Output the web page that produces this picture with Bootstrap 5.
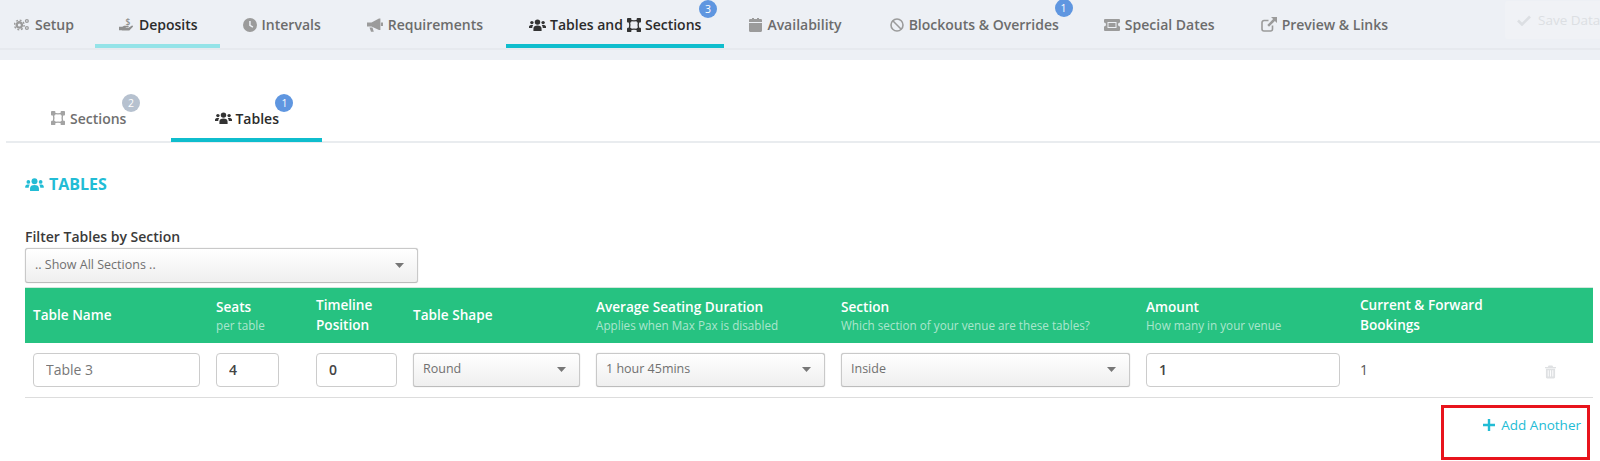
<!DOCTYPE html>
<html lang="en">
<head>
<meta charset="utf-8">
<title>Tables</title>
<link href="https://cdn.jsdelivr.net/npm/bootstrap@5.3.0/dist/css/bootstrap.min.css" rel="stylesheet">
<style>
html,body{height:461px;overflow:hidden}
body{font-family:"Open Sans",sans-serif;font-size:14px;color:#555;background:#fff}
.ic{display:inline-block;fill:currentColor;flex:none}
.topbar{height:60px;background:#edf0f5}
.toprow{height:50px;border-bottom:2px solid #e6e9ee;overflow:hidden;flex-wrap:nowrap}
.toptabs{flex-wrap:nowrap}
.toptab{position:relative;height:48px;padding:5px 23px 0;border-bottom:4px solid transparent;font-weight:600;color:#6c6c6c;gap:5px;white-space:nowrap}
.toptab:hover{color:#6c6c6c}
.toptab .ic{color:#9b9b9b}
.toptab.is-first{padding-left:14px;padding-right:21px}
.toptab.is-on{color:#2b2b2b;border-bottom-color:#0fbdcd;gap:4px}
.toptab.is-on .ic{color:#333}
.toptab.is-light{color:#2b2b2b;border-bottom-color:#94e3e8;padding-left:24px;padding-right:22px}
.toptab.is-light .ic{color:#8f8f8f}
.toptab.is-after{padding-left:25px;padding-right:25px}
.toptab.is-block{padding-right:22px}
.dot{position:absolute;width:18px;height:18px;padding:0;line-height:18px;font-size:10.5px;font-weight:400;border-radius:50%;color:#fff;background:#5f96e0;text-align:center}
.dot-three{left:193px;top:0}
.dot-one{left:188px;top:-1px}
.dot-sec{left:116px;top:-2px}
.dot-tab{left:104px;top:-2px}
.dot-gray{background:#b6c1cf}
.savebtn{margin-left:auto;margin-top:1px;width:95px;height:38px;background:#f0f2f6;color:#dcdfe3;border-radius:3px 0 0 3px;gap:7px;padding-left:12px;font-size:13.5px;white-space:nowrap;flex:none}
.subtabs{margin:36px 0 0 6px;border-bottom:2px solid #e9ecef;height:47px}
.subtab{position:relative;height:46px;padding:2px 45px 0;border-bottom:4px solid transparent;font-weight:600;color:#6f6f6f;gap:5px;margin-bottom:-1px}
.subtab:hover{color:#6f6f6f}
.subtab .ic{color:#a3a3a3}
.subtab.is-on{padding:2px 43px 0 44px;color:#2b2b2b;border-bottom-color:#0fbdcd;gap:3px}
.subtab.is-on .ic{color:#333}
.pagebody{padding:0 4px 0 25px;position:relative}
.headline{margin:31px 0 33px;font-size:16px;line-height:20px;font-weight:700;color:#22bcd5;gap:5px}
.filterlabel{display:block;margin:0 0 1px;font-weight:600;line-height:20px;color:#3a3a3a;font-size:14px}
.pick.form-select{height:34px;padding:0 30px 0 9px;font-size:12.5px;color:#707070;border:1px solid #c9c9c9;border-bottom-color:#bcbcbc;border-radius:3px;box-shadow:0 0 1px #bbb;background-color:#f6f6f6;background-image:url("data:image/svg+xml,%3Csvg xmlns='http://www.w3.org/2000/svg' width='10' height='6'%3E%3Cpath d='M0 0h10L5 6z' fill='%23777'/%3E%3C/svg%3E"),linear-gradient(#fff,#efefef);background-position:right 13px center,0 0;background-size:9px 5px,100% 100%;background-repeat:no-repeat}
.pick-wide{width:393px;height:35px!important;margin-bottom:4px}
.tbl{table-layout:fixed;width:1568px;margin:0;border-collapse:collapse}
.tbl th{background:#26c281;color:#fff;font-weight:600;font-size:13.6px;line-height:20px;height:55px;padding:0 8px;vertical-align:middle;border:0;box-shadow:none;border-top:1px solid #d4e6dd}
.tbl th small{display:block;font-weight:400;font-size:11.7px;line-height:16px;color:rgba(255,255,255,.62)}
.tbl td{height:55px;padding:0 8px;vertical-align:middle;border:0;border-bottom:1px solid #ddd;box-shadow:none;color:#555;font-size:14px}
.fld.form-control{height:34px;padding:0 12px;font-size:14px;border:1px solid #ccc;border-radius:4px;color:#777;box-shadow:none}
.fld-b.form-control{font-weight:600;color:#444}
.w-seats{width:63px}
.w-time{width:81px}
.w-amount{width:194px}
.addrow{margin-top:17px;padding-right:15px;line-height:20px;color:#22bcd5;gap:6px;font-size:13.5px}
.addlink{color:#22bcd5;text-decoration:none}
.redbox{position:absolute;left:1441px;top:405px;width:149px;height:55px;border:3px solid #e8141c;pointer-events:none}
.trash{color:#dfe1e3;margin-left:7px}
.dollar{font-size:9px;font-weight:600}
</style>
</head>
<body>
<svg width="0" height="0" style="position:absolute" aria-hidden="true">
<symbol id="i-users" viewBox="0 0 20 14"><circle cx="10" cy="3.6" r="3.2"/><circle cx="3.4" cy="4.2" r="2"/><circle cx="16.6" cy="4.2" r="2"/><path d="M5.2 14v-2.6C5.2 8.8 7 7.600 10 7.600s4.800 1.200 4.800 3.800V14zM0 10.600v-1.400C0 7.500 1.400 6.900 3.400 6.900c.7 0 1.200.1 1.500.3-.8.9-1.100 2-1.100 3.400zM20 10.600v-1.400c0-1.700-1.400-2.300-3.400-2.300-.7 0-1.200.1-1.500.3.8.9 1.100 2 1.100 3.400z"/></symbol>
<symbol id="i-square" viewBox="0 0 16 16"><path d="M2.500 2.500q5.500 1.500 11 0q-1.500 5.500 0 11q-5.500-1.500-11 0q1.500-5.500 0-11z" fill="none" stroke="currentColor" stroke-width="1.600"/><rect x="0" y="0" width="5" height="5" rx="1"/><rect x="11" y="0" width="5" height="5" rx="1"/><rect x="0" y="11" width="5" height="5" rx="1"/><rect x="11" y="11" width="5" height="5" rx="1"/></symbol>
<symbol id="i-cogs" viewBox="0 0 18 14"><circle cx="6" cy="7.500" r="3" fill="none" stroke="currentColor" stroke-width="2.600"/><circle cx="6" cy="7.500" r="5.400" fill="none" stroke="currentColor" stroke-width="1.600" stroke-dasharray="2.200 2"/><circle cx="14.500" cy="3" r="1.600" fill="none" stroke="currentColor" stroke-width="1.400"/><circle cx="14.500" cy="11" r="1.600" fill="none" stroke="currentColor" stroke-width="1.400"/></symbol>
<symbol id="i-clock" viewBox="0 0 14 14"><path fill-rule="evenodd" d="M7 0a7 7 0 1 1 0 14A7 7 0 0 1 7 0zM6.200 3v4.700l3.300 2 .8-1.200-2.600-1.600V3z"/></symbol>
<symbol id="i-horn" viewBox="0 0 16 14"><path d="M0 4.500h4.500L12 .5h1.400v11.500H12L4.500 8.500H0zM13.900 4.500H16v3.500h-2.100zM2.500 9.500h3l1.300 4.200H4z"/></symbol>
<symbol id="i-cal" viewBox="0 0 13 14"><path d="M0 5h13v7.500c0 .8-.6 1.500-1.400 1.500H1.400C.6 14 0 13.300 0 12.500zM0 2.200C0 1.500.6 1 1.400 1H3V0h2v1h3V0h2v1h1.600c.8 0 1.400.5 1.400 1.200V4H0z"/></symbol>
<symbol id="i-ban" viewBox="0 0 14 14"><circle cx="7" cy="7" r="6" fill="none" stroke="currentColor" stroke-width="1.600"/><path d="M2.800 2.800l8.400 8.400" stroke="currentColor" stroke-width="1.600"/></symbol>
<symbol id="i-ticket" viewBox="0 0 16 12"><path fill-rule="evenodd" d="M1 0h14a1 1 0 0 1 1 1v2.500a2 2 0 0 0 0 4V11a1 1 0 0 1-1 1H1a1 1 0 0 1-1-1V7.500a2 2 0 0 0 0-4V1a1 1 0 0 1 1-1zM3.500 3v6h9V3z"/><path d="M4.500 4h7v4h-7z"/></symbol>
<symbol id="i-ext" viewBox="0 0 16 15"><path d="M11.500 8.500V12a2 2 0 0 1-2 2H3a2 2 0 0 1-2-2V5.500a2 2 0 0 1 2-2h4.500" fill="none" stroke="currentColor" stroke-width="1.600"/><path d="M10 0h6v6l-2.100-2.100L8 9.700 6.300 8l5.800-5.900z"/></symbol>
<symbol id="i-check" viewBox="0 0 14 11"><path d="M1 5.500l4 4 8-8" fill="none" stroke="currentColor" stroke-width="2.600"/></symbol>
<symbol id="i-plus" viewBox="0 0 12 12"><path d="M4.800 0h2.400v4.800H12v2.400H7.200V12H4.800V7.200H0V4.800h4.800z"/></symbol>
<symbol id="i-trash" viewBox="0 0 12 14"><path d="M4 0h4l1 1.500h3v1.300H0V1.500h3zM1 3.500h10v9.200c0 .7-.6 1.300-1.300 1.300H2.300C1.600 14 1 13.400 1 12.700zM3 5v7h1V5zM5.500 5v7h1V5zM8 5v7h1V5z" fill-rule="evenodd"/></symbol>
</svg>

<div class="topbar">
  <div class="toprow d-flex">
    <ul class="nav toptabs">
      <li class="nav-item"><a class="nav-link toptab is-first d-flex align-items-center" href="#"><svg class="ic" width="16" height="13"><use href="#i-cogs"/></svg>Setup</a></li>
      <li class="nav-item"><a class="nav-link toptab is-light d-flex align-items-center" href="#"><svg class="ic" width="15" height="15" viewBox="0 0 16 16"><text class="dollar" x="7" y="8">$</text><path d="M0 10.500h3.500l2-1.200h4.200c.9 0 .9 1.700 0 1.700H7.200v.5h3l3.300-2.200c1.100-.6 2 .6 1.100 1.400L11 14.500H3.500L2.800 14H0z"/></svg>Deposits</a></li>
      <li class="nav-item"><a class="nav-link toptab d-flex align-items-center" href="#"><svg class="ic" width="14" height="14"><use href="#i-clock"/></svg>Intervals</a></li>
      <li class="nav-item"><a class="nav-link toptab d-flex align-items-center" href="#"><svg class="ic" width="16" height="14"><use href="#i-horn"/></svg>Requirements</a></li>
      <li class="nav-item"><a class="nav-link toptab is-on d-flex align-items-center" href="#"><svg class="ic" width="17" height="12"><use href="#i-users"/></svg>Tables and <svg class="ic" width="14" height="14"><use href="#i-square"/></svg>Sections<span class="badge dot dot-three">3</span></a></li>
      <li class="nav-item"><a class="nav-link toptab is-after d-flex align-items-center" href="#"><svg class="ic" width="13" height="14"><use href="#i-cal"/></svg>Availability</a></li>
      <li class="nav-item"><a class="nav-link toptab is-block d-flex align-items-center" href="#"><svg class="ic" width="14" height="14"><use href="#i-ban"/></svg>Blockouts &amp; Overrides<span class="badge dot dot-one">1</span></a></li>
      <li class="nav-item"><a class="nav-link toptab d-flex align-items-center" href="#"><svg class="ic" width="16" height="12"><use href="#i-ticket"/></svg>Special Dates</a></li>
      <li class="nav-item"><a class="nav-link toptab d-flex align-items-center" href="#"><svg class="ic" width="16" height="15"><use href="#i-ext"/></svg>Preview &amp; Links</a></li>
    </ul>
    <div class="savebtn d-flex align-items-center"><svg class="ic" width="14" height="11"><use href="#i-check"/></svg>Save Data</div>
  </div>
</div>

<ul class="nav subtabs">
  <li class="nav-item"><a class="nav-link subtab d-flex align-items-center" href="#"><svg class="ic" width="14" height="14"><use href="#i-square"/></svg>Sections<span class="badge dot dot-gray dot-sec">2</span></a></li>
  <li class="nav-item"><a class="nav-link subtab is-on d-flex align-items-center" href="#"><svg class="ic" width="17" height="12"><use href="#i-users"/></svg>Tables<span class="badge dot dot-tab">1</span></a></li>
</ul>

<div class="pagebody">
  <div class="headline d-flex align-items-center"><svg class="ic" width="19" height="13"><use href="#i-users"/></svg>TABLES</div>
  <label class="filterlabel" for="flt">Filter Tables by Section</label>
  <select id="flt" class="form-select pick pick-wide"><option>.. Show All Sections ..</option></select>
  <table class="table tbl">
    <colgroup><col style="width:183px"><col style="width:100px"><col style="width:97px"><col style="width:183px"><col style="width:245px"><col style="width:305px"><col style="width:214px"><col style="width:178px"><col style="width:63px"></colgroup>
    <thead>
      <tr>
        <th>Table Name</th>
        <th>Seats<small>per table</small></th>
        <th>Timeline Position</th>
        <th>Table Shape</th>
        <th>Average Seating Duration<small>Applies when Max Pax is disabled</small></th>
        <th>Section<small>Which section of your venue are these tables?</small></th>
        <th>Amount<small>How many in your venue</small></th>
        <th>Current &amp; Forward Bookings</th>
        <th></th>
      </tr>
    </thead>
    <tbody>
      <tr>
        <td><input class="form-control fld" value="Table 3" aria-label="Table name"></td>
        <td><input class="form-control fld fld-b w-seats" value="4" aria-label="Seats"></td>
        <td><input class="form-control fld fld-b w-time" value="0" aria-label="Timeline position"></td>
        <td><select class="form-select pick" aria-label="Shape"><option>Round</option></select></td>
        <td><select class="form-select pick" aria-label="Duration"><option>1 hour 45mins</option></select></td>
        <td><select class="form-select pick" aria-label="Section"><option>Inside</option></select></td>
        <td><input class="form-control fld fld-b w-amount" value="1" aria-label="Amount"></td>
        <td>1</td>
        <td><svg class="ic trash" width="11" height="14"><use href="#i-trash"/></svg></td>
      </tr>
    </tbody>
  </table>
  <div class="addrow d-flex justify-content-end align-items-center"><svg class="ic" width="12" height="12"><use href="#i-plus"/></svg><a class="addlink" href="#">Add Another</a></div>
</div>
<div class="redbox"></div>
<script src="https://cdn.jsdelivr.net/npm/bootstrap@5.3.0/dist/js/bootstrap.bundle.min.js"></script>
</body>
</html>
